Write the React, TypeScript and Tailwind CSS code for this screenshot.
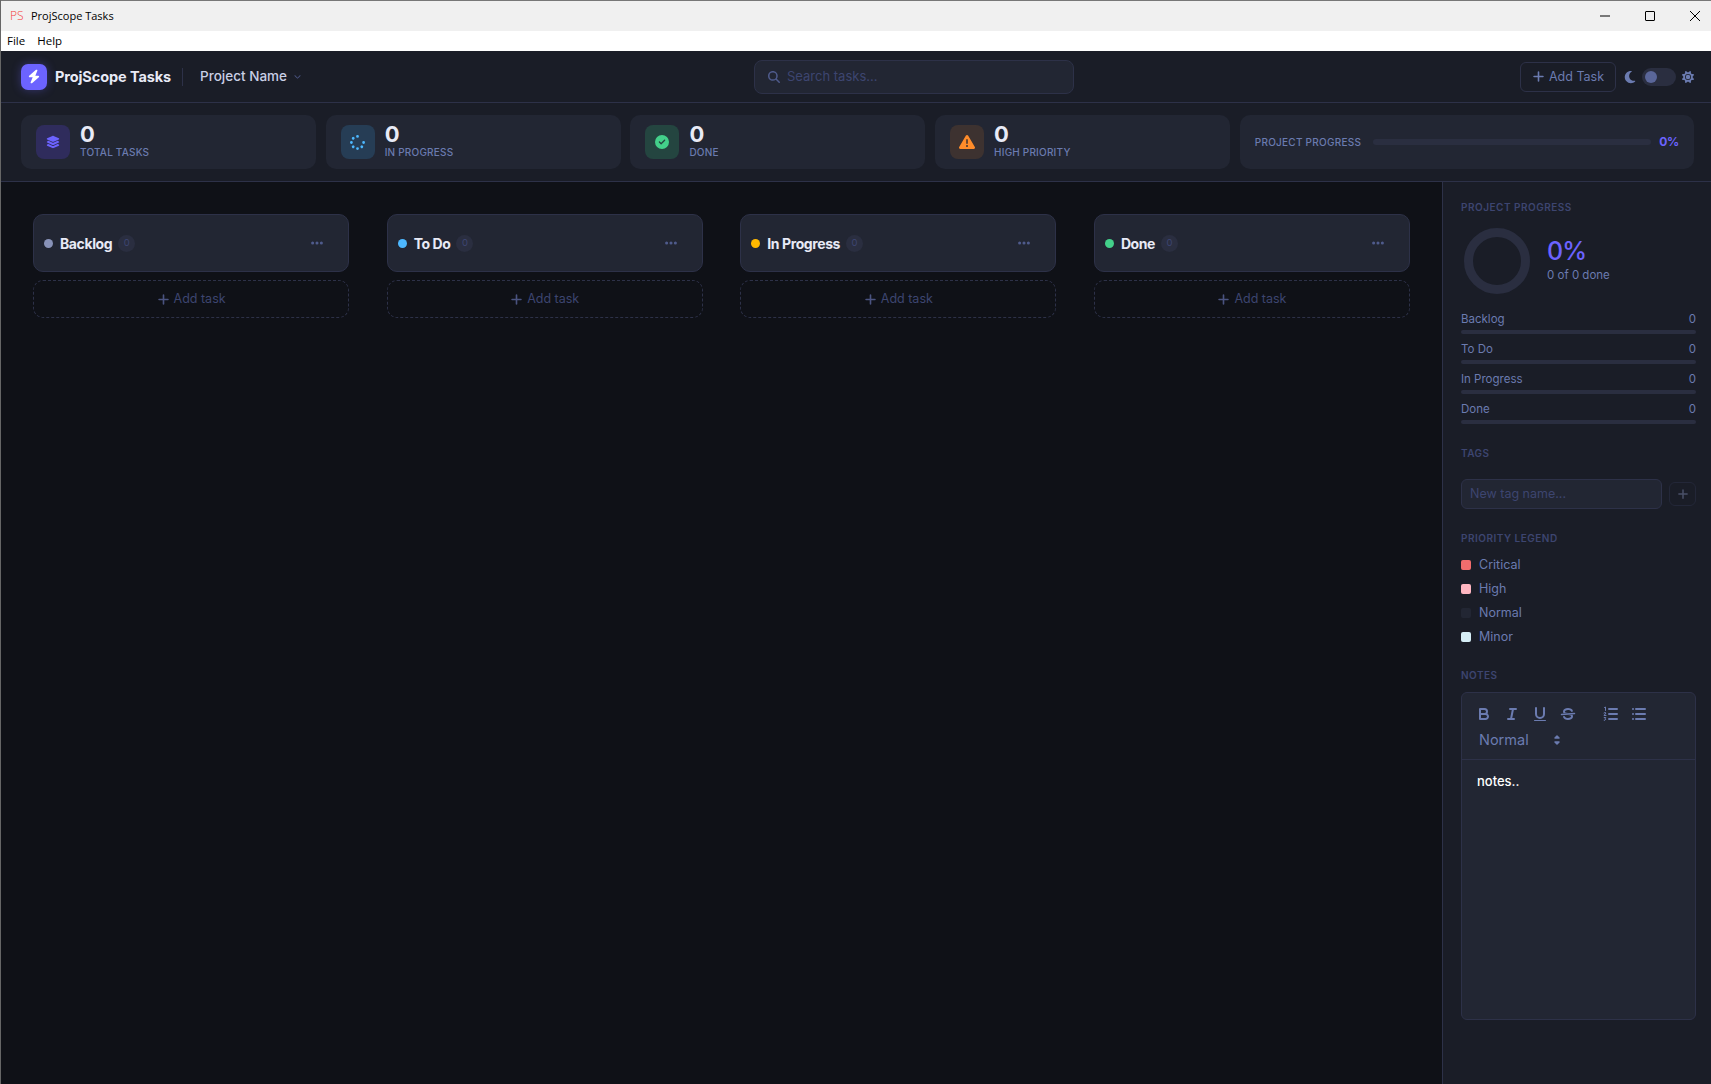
import { FaBolt, FaChevronDown, FaCircleCheck, FaEllipsis, FaLayerGroup, FaMagnifyingGlass, FaMoon, FaPlus, FaSpinner, FaSun, FaTriangleExclamation } from "react-icons/fa6";

const stats = [
  { label: "TOTAL TASKS", icon: <FaLayerGroup className="w-[14px] h-[14px] text-[#6c63ff]" />, bg: "bg-[#2f2c5c]" },
  { label: "IN PROGRESS", icon: <FaSpinner className="w-[15px] h-[15px] text-[#4db8ff]" />, bg: "bg-[#263d55]" },
  { label: "DONE", icon: <FaCircleCheck className="w-[14px] h-[14px] text-[#43d08a]" />, bg: "bg-[#244540]" },
  { label: "HIGH PRIORITY", icon: <FaTriangleExclamation className="w-[16px] h-[16px] text-[#ff8c2a]" />, bg: "bg-[#3d3230]" },
];

const columns = [
  { name: "Backlog", dot: "bg-[#8892b8]" },
  { name: "To Do", dot: "bg-[#4db8ff]" },
  { name: "In Progress", dot: "bg-[#ffb800]" },
  { name: "Done", dot: "bg-[#43d08a]" },
];

const legend = [
  { name: "Critical", color: "bg-[#f26d6d]" },
  { name: "High", color: "bg-[#ffb6c1]" },
  { name: "Normal", color: "bg-[#222633]" },
  { name: "Minor", color: "bg-[#d6eef6]" },
];

const SectionLabel = ({ text }: { text: string }) => (
  <div className="h-[14px] leading-[14px] text-[10px] font-semibold tracking-[0.5px] text-[#3d4570]">{text}</div>
);

const ToolBtn = ({ children }: { children: React.ReactNode }) => (
  <span className="w-[28px] h-[24px] flex items-center justify-center">
    <svg viewBox="0 0 18 18" className="w-[18px] h-[18px] text-[#6b7bb0]" fill="none" stroke="currentColor" strokeWidth="2" strokeLinecap="round" strokeLinejoin="round">
      {children}
    </svg>
  </span>
);

const App = () => {
  return (
    <div className="h-screen flex flex-col overflow-hidden border-l border-[#666] bg-[#0f1117] font-['Inter',sans-serif]">
      {/* window chrome */}
      <div className="h-[31px] shrink-0 flex items-center bg-[#f0f0f0] border-t border-[#777] font-['Open_Sans',sans-serif]">
        <span className="ml-[9px] w-[14px] text-[12px] leading-none text-[#f53b3b] font-light">PS</span>
        <span className="ml-[7px] text-[11px] text-black">ProjScope Tasks</span>
        <div className="ml-auto flex items-center text-black">
          <svg viewBox="0 0 12 12" className="w-[12px] h-[12px] mr-[33px]" stroke="currentColor" fill="none"><path d="M1 6h10" /></svg>
          <svg viewBox="0 0 12 12" className="w-[12px] h-[12px] mr-[33px]" stroke="currentColor" fill="none"><rect x="1.5" y="1.5" width="9" height="9" rx="0.5" /></svg>
          <svg viewBox="0 0 12 12" className="w-[12px] h-[12px] mr-[10px]" stroke="currentColor" fill="none"><path d="M1 1l10 10M11 1L1 11" /></svg>
        </div>
      </div>
      <div className="h-[20px] shrink-0 flex items-center gap-[12px] pl-[6px] bg-white text-[11.5px] text-black font-['Open_Sans',sans-serif]">
        <span>File</span>
        <span>Help</span>
      </div>

      {/* header */}
      <header className="h-[52px] shrink-0 flex items-center relative pl-[20px] pr-[17px] bg-[#1a1d27] border-b border-[#2d3148]">
        <div className="w-[26px] h-[26px] rounded-[7px] bg-[#6c63ff] flex items-center justify-center shadow-[0_0_10px_rgba(108,99,255,0.35)]">
          <FaBolt className="w-[12px] h-[15px] text-white" />
        </div>
        <span className="ml-[8px] text-[14.5px] font-bold tracking-[-0.1px] text-[#e8eaf6]">ProjScope Tasks</span>
        <div className="ml-[11px] w-px h-[18px] bg-[#2d3148]" />
        <span className="ml-[17px] text-[13.5px] font-medium text-[#c9cfe6]">Project Name</span>
        <FaChevronDown className="ml-[7px] w-[7px] h-[7px] text-[#4a5380]" />
        <div className="absolute left-[753px] top-[9px] w-[320px] h-[34px] flex items-center pl-[13px] pb-[1px] rounded-[8px] bg-[#222633] border border-[#2d3148]">
          <FaMagnifyingGlass className="w-[12px] h-[12px] text-[#4f5b8c]" />
          <span className="ml-[7px] text-[13px] text-[#3d4570]">Search tasks...</span>
        </div>
        <div className="ml-auto flex items-center">
          <div className="w-[96px] h-[30px] flex items-center justify-center gap-[4px] rounded-[6px] border border-[#2d3148] text-[12.5px] text-[#6b7bb0]">
            <FaPlus className="w-[13px] h-[13px]" />
            <span className="pt-[1px]">Add Task</span>
          </div>
          <FaMoon className="ml-[7px] w-[14px] h-[14px] text-[#6b7bb0]" />
          <div className="ml-[5px] w-[34px] h-[18px] rounded-full bg-[#2a2e40] flex items-center pl-[3px]">
            <div className="w-[12px] h-[12px] rounded-full bg-[#5a6699]" />
          </div>
          <FaSun className="ml-[6px] w-[12px] h-[12px] text-[#6b7bb0]" />
        </div>
      </header>

      {/* stats */}
      <div className="shrink-0 flex gap-[9.7px] py-[12px] pl-[20px] pr-[17px] bg-[#1a1d27] border-b border-[#2d3148]">
        {stats.map((s) => (
          <div key={s.label} className="w-[295px] h-[54px] flex items-center gap-[10px] pl-[15px] rounded-[10px] bg-[#222633]">
            <div className={`w-[34px] h-[34px] rounded-[8px] flex items-center justify-center ${s.bg}`}>{s.icon}</div>
            <div className="flex flex-col pb-[2px]">
              <span className="mb-[1px] text-[22px] leading-[21px] font-bold text-[#e8eaf6]">0</span>
              <span className="text-[10px] leading-[13px] tracking-[0.2px] font-medium text-[#6b7bb0]">{s.label}</span>
            </div>
          </div>
        ))}
        <div className="flex-1 h-[54px] flex items-center px-[15px] rounded-[10px] bg-[#222633]">
          <span className="text-[10px] font-medium tracking-[0.25px] text-[#6b7bb0]">PROJECT PROGRESS</span>
          <div className="ml-[12px] flex-1 h-[6px] rounded-full bg-[#2a2e40]" />
          <span className="ml-[8px] text-[12px] font-bold tracking-[-0.3px] text-[#6c63ff]">0%</span>
        </div>
      </div>

      <div className="flex-1 flex min-h-0">
        {/* board */}
        <main className="flex-1 grid grid-cols-4 gap-[37.5px] content-start px-[32px] pt-[32px]">
          {columns.map((c) => (
            <div key={c.name} className="flex flex-col gap-[8px]">
              <div className="h-[58px] flex items-center pl-[10px] pr-[24px] rounded-[10px] bg-[#222633] border border-[#2d3148]">
                <span className={`w-[9px] h-[9px] rounded-full ${c.dot}`} />
                <span className="ml-[7px] text-[14px] font-bold tracking-[-0.4px] text-[#e8eaf6]">{c.name}</span>
                <span className="ml-[6px] w-[17px] h-[17px] rounded-full bg-[#2a2e40] flex items-center justify-center text-[9.5px] text-[#3d4570]">0</span>
                <FaEllipsis className="ml-auto w-[14px] h-[14px] text-[#4f5b8c]" />
              </div>
              <div className="h-[38px] flex items-center justify-center gap-[4px] rounded-[10px] border border-dashed border-[#2d3148] text-[12.5px] text-[#3d4570]">
                <FaPlus className="w-[13px] h-[13px] text-[#4a5380]" />
                <span>Add task</span>
              </div>
            </div>
          ))}
        </main>

        {/* sidebar */}
        <aside className="w-[269px] shrink-0 pt-[18px] pl-[18px] pr-[15px] bg-[#1a1d27] border-l border-[#2d3148]">
          <SectionLabel text="PROJECT PROGRESS" />
          <div className="mt-[14px] flex items-center pl-[3px]">
            <div className="w-[66px] h-[66px] rounded-full border-[9px] border-[#2a2e40]" />
            <div className="ml-[17px]">
              <div className="text-[25px] leading-[28px] font-medium tracking-[-1px] text-[#6c63ff]">0%</div>
              <div className="mt-[2px] text-[11.5px] text-[#6b7bb0]">0 of 0 done</div>
            </div>
          </div>
          <div className="mt-[18px] flex flex-col gap-[8px]">
            {columns.map((c) => (
              <div key={c.name}>
                <div className="h-[14px] pt-[2px] flex justify-between items-center text-[11.5px] text-[#6b7bb0]">
                  <span>{c.name}</span>
                  <span>0</span>
                </div>
                <div className="mt-[4px] h-[4px] rounded-full bg-[#2a2e40]" />
              </div>
            ))}
          </div>

          <div className="mt-[22px]"><SectionLabel text="TAGS" /></div>
          <div className="mt-[19px] flex items-center gap-[7px]">
            <div className="w-[201px] h-[30px] flex items-center pl-[8px] rounded-[6px] bg-[#222633] border border-[#2d3148] text-[12.5px] text-[#3d4570]">New tag name...</div>
            <div className="flex-1 h-[24px] flex items-center justify-center rounded-[6px] border border-[#232738]">
              <FaPlus className="w-[12px] h-[12px] text-[#4a5068]" />
            </div>
          </div>

          <div className="mt-[22px]"><SectionLabel text="PRIORITY LEGEND" /></div>
          <div className="mt-[8px]">
            {legend.map((l) => (
              <div key={l.name} className="h-[24px] flex items-center gap-[8px] text-[12.5px] text-[#6b7bb0]">
                <span className={`w-[10px] h-[10px] rounded-[2px] ${l.color}`} />
                <span>{l.name}</span>
              </div>
            ))}
          </div>

          <div className="mt-[19px]"><SectionLabel text="NOTES" /></div>
          <div className="mt-[10px] h-[328px] rounded-[6px] bg-[#222633] border border-[#2d3148]">
            <div className="h-[67px] pt-[9px] pl-[8px] border-b border-[#2d3148]">
              <div className="flex">
                <ToolBtn>
                  <path d="M5,4H9.5A2.5,2.5,0,0,1,12,6.5v0A2.5,2.5,0,0,1,9.5,9H5V4Z" />
                  <path d="M5,9h5.5A2.5,2.5,0,0,1,13,11.5v0A2.5,2.5,0,0,1,10.5,14H5V9Z" />
                </ToolBtn>
                <ToolBtn>
                  <path d="M7 4h6M5 14h6M8 14l2-10" />
                </ToolBtn>
                <ToolBtn>
                  <path d="M5,3V9a4,4,0,0,0,4,4H9a4,4,0,0,0,4-4V3" />
                  <rect x="3" y="15" width="12" height="1" rx="0.5" fill="currentColor" stroke="none" />
                </ToolBtn>
                <ToolBtn>
                  <path d="M15.5 8.5L2.5 9.5" strokeWidth="1.5" />
                  <path fill="currentColor" stroke="none" d="M9,8C6.5,7.8,6,7.5,6,6.5,6,5.8,7.3,5,9,5c1.6,0,2.8.7,3,1.3a1,1,0,0,0,1.9-.6C13.4,4.1,11.4,3,9,3,6.2,3,4,4.5,4,6.5a3.2,3.2,0,0,0,.5,1.8Z" />
                  <path fill="currentColor" stroke="none" d="M9,10C11.5,10.2,12,10.5,12,11.5c0,.7-1.3,1.5-3,1.5-1.6,0-2.8-.7-3-1.3a1,1,0,1,0-1.9.6C4.6,13.9,6.6,15,9,15c2.8,0,5-1.5,5-3.5a3.2,3.2,0,0,0-.5-1.8Z" />
                </ToolBtn>
                <span className="w-[15px]" />
                <ToolBtn>
                  <path d="M7 4h8M7 9h8M7 14h8" />
                  <path strokeWidth="1" d="M2.5 2.5l1-.5v3.5M2 8l1-.5 1 .5-2 2.5h2M2.2 12.5h1.6l-.8 1.2.9.5-.9 1H2.2" />
                </ToolBtn>
                <ToolBtn>
                  <path d="M6 4h9M6 9h9M6 14h9M3 4h0M3 9h0M3 14h0" />
                </ToolBtn>
              </div>
              <div className="mt-[1.5px] w-[98px] h-[24px] flex items-center justify-between pl-[9px] pr-[2px] text-[14.5px] text-[#6b7bb0]">
                <span>Normal</span>
                <svg viewBox="0 0 18 18" className="w-[18px] h-[18px]" fill="currentColor" stroke="currentColor" strokeWidth="1.5" strokeLinejoin="round">
                  <polygon points="7 11 9 13 11 11" />
                  <polygon points="7 7 9 5 11 7" />
                </svg>
              </div>
            </div>
            <div className="pt-[12px] pl-[15px] text-[13px] leading-[19.5px] font-medium text-white">notes..</div>
          </div>
        </aside>
      </div>
    </div>
  );
};

export default App;
